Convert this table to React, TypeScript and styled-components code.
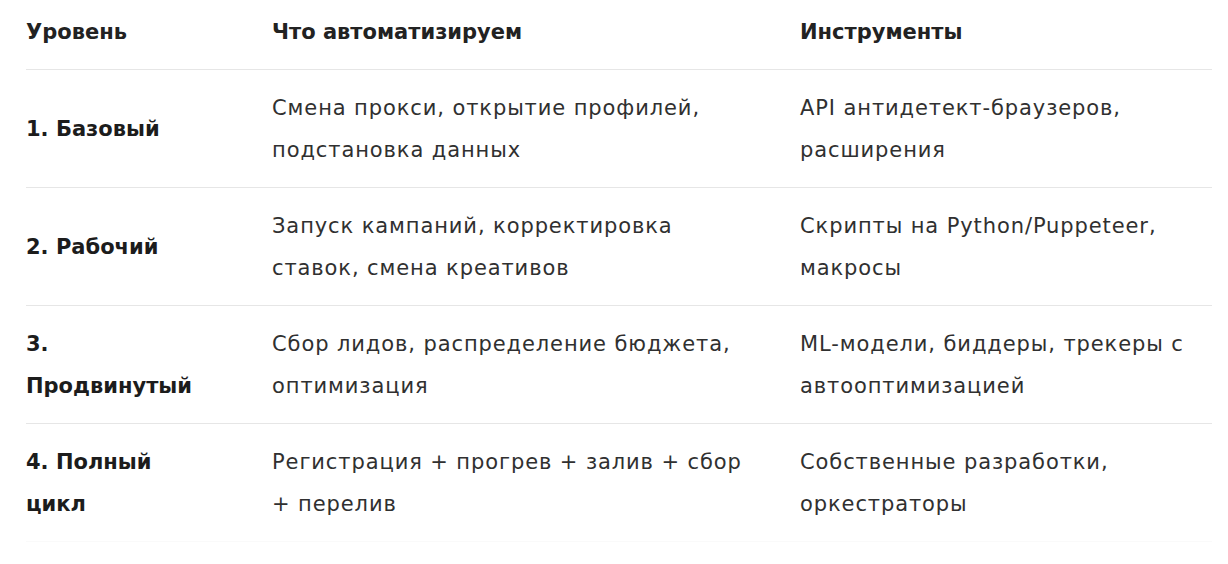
import React from 'react'
import styled, { createGlobalStyle } from 'styled-components'

const GlobalStyle = createGlobalStyle`
  html, body {
    margin: 0;
    padding: 0;
    background: #ffffff;
  }
  body {
    font-family: 'DejaVu Sans', 'Noto Sans', sans-serif;
    -webkit-font-smoothing: antialiased;
  }
`

interface LevelRow {
  level: string
  what: string
  tools: string
}

const rows: LevelRow[] = [
  {
    level: '1. Базовый',
    what: 'Смена прокси, открытие профилей, подстановка данных',
    tools: 'API антидетект-браузеров, расширения',
  },
  {
    level: '2. Рабочий',
    what: 'Запуск кампаний, корректировка ставок, смена креативов',
    tools: 'Скрипты на Python/Puppeteer, макросы',
  },
  {
    level: '3. Продвинутый',
    what: 'Сбор лидов, распределение бюджета, оптимизация',
    tools: 'ML-модели, биддеры, трекеры с автооптимизацией',
  },
  {
    level: '4. Полный цикл',
    what: 'Регистрация + прогрев + залив + сбор + перелив',
    tools: 'Собственные разработки, оркестраторы',
  },
]

export default function App() {
  return (
    <>
      <GlobalStyle />
      <Wrapper>
        <Table>
          <HeaderRow>
            <HeadCell>Уровень</HeadCell>
            <HeadCell>Что автоматизируем</HeadCell>
            <HeadCell>Инструменты</HeadCell>
          </HeaderRow>
          {rows.map((row, i) => (
            <BodyRow key={row.level} $last={i === rows.length - 1}>
              <LevelCell>{row.level}</LevelCell>
              <Cell>{row.what}</Cell>
              <Cell>{row.tools}</Cell>
            </BodyRow>
          ))}
        </Table>
      </Wrapper>
    </>
  )
}

const Wrapper = styled.div`
  padding: 0 16px 0 26px;
  width: 1228px;
  box-sizing: border-box;
`

const Table = styled.div`
  display: flex;
  flex-direction: column;
`

// level | what | tools, text boxes narrower than the columns so lines wrap like the source
const gridColumns = `
  display: grid;
  grid-template-columns: 246px 528px 1fr;
  align-items: center;

  & > :nth-child(1) { padding-right: 64px; }
  & > :nth-child(2) { padding-right: 46px; }
`

const HeaderRow = styled.div`
  ${gridColumns}
  padding: 11px 0 16px;
  border-bottom: 1px solid #e6e6e6;
`

const BodyRow = styled.div<{ $last?: boolean }>`
  ${gridColumns}
  padding: 16px 0;
  min-height: 85px;
  border-bottom: 1px solid ${({ $last }) => ($last ? '#fafafa' : '#e6e6e6')};
`

const HeadCell = styled.div`
  font-size: 21px;
  line-height: 42px;
  font-weight: 700;
  color: #222222;
`

const Cell = styled.div`
  font-size: 21px;
  line-height: 42px;
  letter-spacing: 0.9px;
  color: #303030;
`

const LevelCell = styled(Cell)`
  font-weight: 700;
  letter-spacing: 0;
  color: #1c1c1c;
`
